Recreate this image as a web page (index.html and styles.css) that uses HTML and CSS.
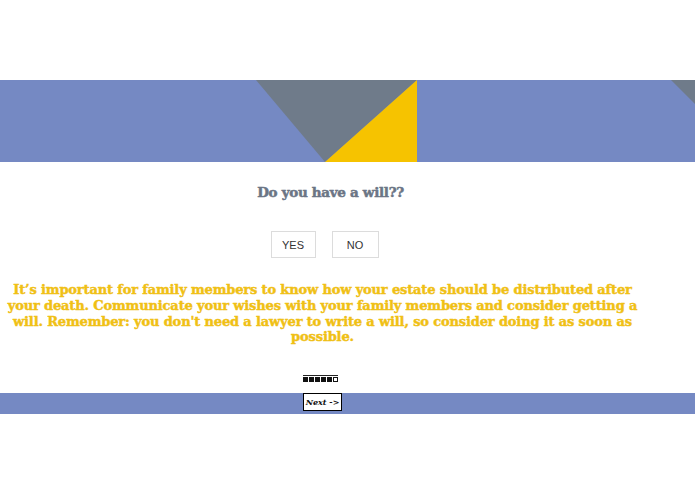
FILE: index.html
```html
<!DOCTYPE html>
<html>
<head>
<meta charset="utf-8">
<link rel="stylesheet" href="styles.css">
</head>
<body>
<div class="top-space"></div>
<div class="banner">
  <svg class="banner-art" width="695" height="82" viewBox="0 0 695 82">
    <rect x="0" y="0" width="695" height="82" fill="#7589c3"/>
    <polygon points="256,0 417,0 325,82" fill="#6f7b8a"/>
    <polygon points="417,0 417,82 325,82" fill="#f6c300"/>
    <polygon points="671,0 695,0 695,24" fill="#6f7b8a"/>
  </svg>
</div>
<main class="content">
  <h1 class="question">Do you have a will??</h1>
  <div class="answers">
    <button class="answer yes">YES</button>
    <button class="answer no">NO</button>
  </div>
  <p class="advice">It’s important for family members to know how your estate should be distributed after your death. Communicate your wishes with your family members and consider getting a will. Remember: you don't need a lawyer to write a will, so consider doing it as soon as possible.</p>
  <div class="progress">
    <span class="sq"></span><span class="sq"></span><span class="sq"></span><span class="sq"></span><span class="sq"></span><span class="sq empty"></span>
  </div>
</main>
<footer class="footer">
  <button class="next">Next -&gt;</button>
</footer>
</body>
</html>
```
FILE: styles.css
```css
html, body {
  margin: 0;
  padding: 0;
  background: #ffffff;
}
body {
  width: 695px;
  font-family: "DejaVu Serif", "Liberation Serif", serif;
}
.top-space {
  height: 80px;
}
.banner {
  height: 82px;
  overflow: hidden;
}
.banner-art {
  display: block;
}
.content {
  width: 645px;
  display: flex;
  flex-direction: column;
  align-items: center;
}
.question {
  margin: 21px 0 0 16px;
  font-size: 13.5px;
  line-height: 18px;
  font-weight: bold;
  color: #6b7585;
  letter-spacing: -0.3px;
  -webkit-text-stroke: 0.5px #6b7585;
}
.answers {
  display: flex;
  gap: 16px;
  margin-top: 30px;
  margin-left: 4px;
}
.answer {
  font-family: "Liberation Sans", Arial, sans-serif;
  font-size: 11px;
  color: #333;
  background: #fff;
  border: 1px solid #dcdcdc;
  height: 27px;
  padding: 0;
}
.answer.yes { width: 45px; }
.answer.no { width: 47px; }
.advice {
  margin: 24px 0 0 0;
  text-align: center;
  font-size: 13px;
  line-height: 15.8px;
  font-weight: bold;
  color: #f0c015;
  letter-spacing: -0.15px;
  -webkit-text-stroke: 0.45px #f0c015;
}
.progress {
  display: flex;
  gap: 1px;
  margin-top: 30px;
  margin-left: -4px;
  border-top: 1px solid #222;
  padding-top: 1px;
}
.sq {
  width: 5px;
  height: 5px;
  background: #111;
}
.sq.empty {
  width: 3px;
  height: 3px;
  background: #fff;
  border: 1px solid #111;
}
.footer {
  margin-top: 11px;
  height: 21px;
  background: #7589c3;
  display: flex;
  padding-left: 303px;
}
.next {
  width: 39px;
  height: 18px;
  padding: 0;
  background: #fff;
  border: 1px solid #000;
  font-family: "DejaVu Serif", "Liberation Serif", serif;
  font-weight: bold;
  font-style: italic;
  font-size: 8px;
  color: #111;
}
```
